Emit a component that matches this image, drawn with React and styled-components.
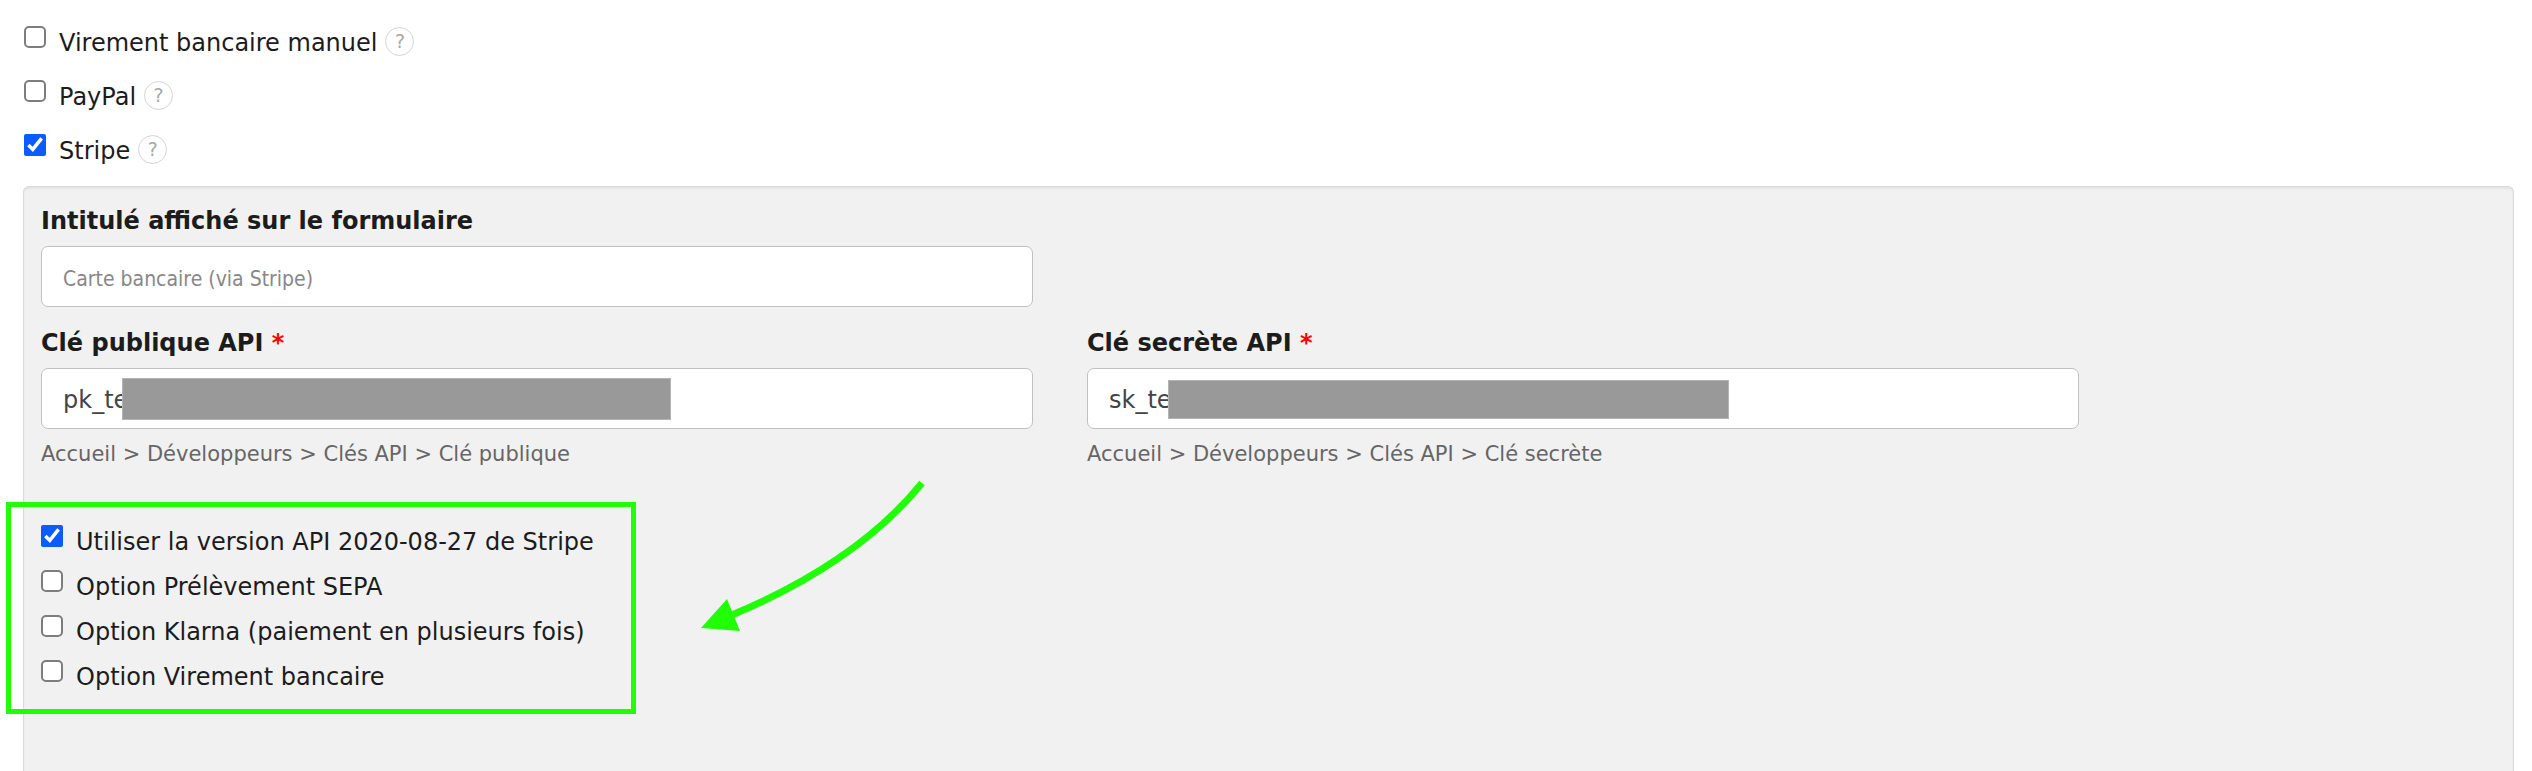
import React, { useState } from "react";
import styled, { createGlobalStyle } from "styled-components";

const GlobalStyle = createGlobalStyle`
  * {
    box-sizing: border-box;
  }
  body {
    margin: 0;
    background: #fff;
    color: #1c1c1c;
    font-family: Verdana, "DejaVu Sans", sans-serif;
    font-size: 24px;
    line-height: 34px;
  }
`;

const Page = styled.main`
  display: flex;
  flex-direction: column;
  min-height: 100vh;
  padding: 26px 18px 0 23px;
`;

const CheckList = styled.div`
  display: flex;
  flex-direction: column;
  gap: ${({ $gap }) => $gap}px;
`;

const MethodList = styled(CheckList)`
  padding-left: 1px;
  margin-bottom: 18px;
`;

const CheckRow = styled.div`
  display: flex;
  align-items: flex-start;
`;

const CheckLabel = styled.label`
  display: flex;
  align-items: flex-start;
  gap: 13px;
  white-space: nowrap;
`;

const Checkbox = styled.input.attrs({ type: "checkbox" })`
  flex: none;
  width: 22px;
  height: 22px;
  margin: 0;
  accent-color: #0b5cff;

  &:not(:checked) {
    appearance: none;
    border: 2px solid #7d7d7d;
    border-radius: 5px;
    background: #fff;
  }
`;

const HelpButton = styled.button`
  width: 29px;
  height: 29px;
  margin: 1px 0 0 8px;
  padding: 0;
  border: 1px solid #d4d4d4;
  border-radius: 50%;
  background: #fff;
  color: #a8a8a8;
  font-family: inherit;
  font-size: 19px;
  line-height: 27px;
`;

const Panel = styled.section`
  flex: 1;
  padding: 17px;
  border: 1px solid #dadada;
  border-bottom: 0;
  border-radius: 6px 6px 0 0;
  background: #f1f1f1;
  box-shadow: inset 0 2px 2px rgba(0, 0, 0, 0.05);
`;

const FieldGrid = styled.div`
  display: grid;
  grid-template-columns: repeat(2, minmax(0, 992px));
  gap: 54px;

  & + & {
    margin-top: 19px;
  }
`;

const Field = styled.div`
  min-width: 0;
`;

const FieldLabel = styled.label`
  display: block;
  margin-bottom: 8px;
  font-weight: bold;
`;

const Required = styled.span`
  color: #ff0000;
`;

const InputWrap = styled.div`
  position: relative;
`;

const TextInput = styled.input`
  display: block;
  width: 100%;
  height: 61px;
  padding: 2px 21px 0;
  border: 1px solid #c0c0c0;
  border-radius: 7px;
  background: #fff;
  color: #444;
  font-family: inherit;
  font-size: 24px;

  &::placeholder {
    color: #888;
    font-family: Tahoma, "DejaVu Sans Condensed", "DejaVu Sans", sans-serif;
    font-size: 21px;
  }
`;

// Hides the rest of the key
const Mask = styled.span`
  position: absolute;
  top: ${({ $top }) => $top}px;
  left: 81px;
  width: ${({ $width }) => $width}px;
  height: ${({ $height }) => $height}px;
  border: 1px solid #b4b4b4;
  background: #999;
`;

const Hint = styled.p`
  margin: 8px 0 0;
  color: #666;
  font-size: 21px;
`;

const Options = styled.div`
  position: relative;
  width: fit-content;
  margin-top: 54px;
`;

const Highlight = styled.div`
  position: absolute;
  top: -23px;
  left: -35px;
  width: 630px;
  height: 212px;
  border: 5px solid #21ff06;
  pointer-events: none;
`;

const Arrow = styled.svg`
  position: absolute;
  top: -45px;
  left: 659px;
  width: 226px;
  height: 156px;
  pointer-events: none;
`;

const methods = [
  { id: "virement", label: "Virement bancaire manuel", checked: false },
  { id: "paypal", label: "PayPal", checked: false },
  { id: "stripe", label: "Stripe", checked: true },
];

const stripeOptions = [
  { id: "api-version", label: "Utiliser la version API 2020-08-27 de Stripe", checked: true },
  { id: "sepa", label: "Option Prélèvement SEPA", checked: false },
  { id: "klarna", label: "Option Klarna (paiement en plusieurs fois)", checked: false },
  { id: "virement-stripe", label: "Option Virement bancaire", checked: false },
];

const CheckItem = ({ item, help }) => {
  const [checked, setChecked] = useState(item.checked);

  return (
    <CheckRow>
      <CheckLabel htmlFor={item.id}>
        <Checkbox id={item.id} checked={checked} onChange={(e) => setChecked(e.target.checked)} />
        {item.label}
      </CheckLabel>
      {help && <HelpButton type="button">?</HelpButton>}
    </CheckRow>
  );
};

const KeyField = ({ id, label, value, hint, mask }) => (
  <Field>
    <FieldLabel htmlFor={id}>
      {label} <Required>*</Required>
    </FieldLabel>
    <InputWrap>
      <TextInput id={id} type="text" defaultValue={value} required />
      <Mask $top={mask.top} $width={mask.width} $height={mask.height} />
    </InputWrap>
    <Hint>{hint}</Hint>
  </Field>
);

const App = () => {
  return (
    <>
      <GlobalStyle />
      <Page>
        <MethodList $gap={20}>
          {methods.map((item) => (
            <CheckItem key={item.id} item={item} help />
          ))}
        </MethodList>
        <Panel>
          <FieldGrid>
            <Field>
              <FieldLabel htmlFor="title">Intitulé affiché sur le formulaire</FieldLabel>
              <TextInput id="title" type="text" placeholder="Carte bancaire (via Stripe)" />
            </Field>
          </FieldGrid>
          <FieldGrid>
            <KeyField
              id="public-key"
              label="Clé publique API"
              value="pk_te"
              hint="Accueil > Développeurs > Clés API > Clé publique"
              mask={{ top: 10, width: 549, height: 42 }}
            />
            <KeyField
              id="secret-key"
              label="Clé secrète API"
              value="sk_te"
              hint="Accueil > Développeurs > Clés API > Clé secrète"
              mask={{ top: 12, width: 561, height: 39 }}
            />
          </FieldGrid>
          <Options>
            <CheckList $gap={11}>
              {stripeOptions.map((item) => (
                <CheckItem key={item.id} item={item} />
              ))}
            </CheckList>
            <Highlight />
            <Arrow viewBox="0 0 226 156" aria-hidden="true">
              <path d="M32 135 Q158 82 222 3" fill="none" stroke="#21ff06" strokeWidth="7" />
              <path d="M1 148 L27 119 L40 151 Z" fill="#21ff06" />
            </Arrow>
          </Options>
        </Panel>
      </Page>
    </>
  );
};

export default App;
